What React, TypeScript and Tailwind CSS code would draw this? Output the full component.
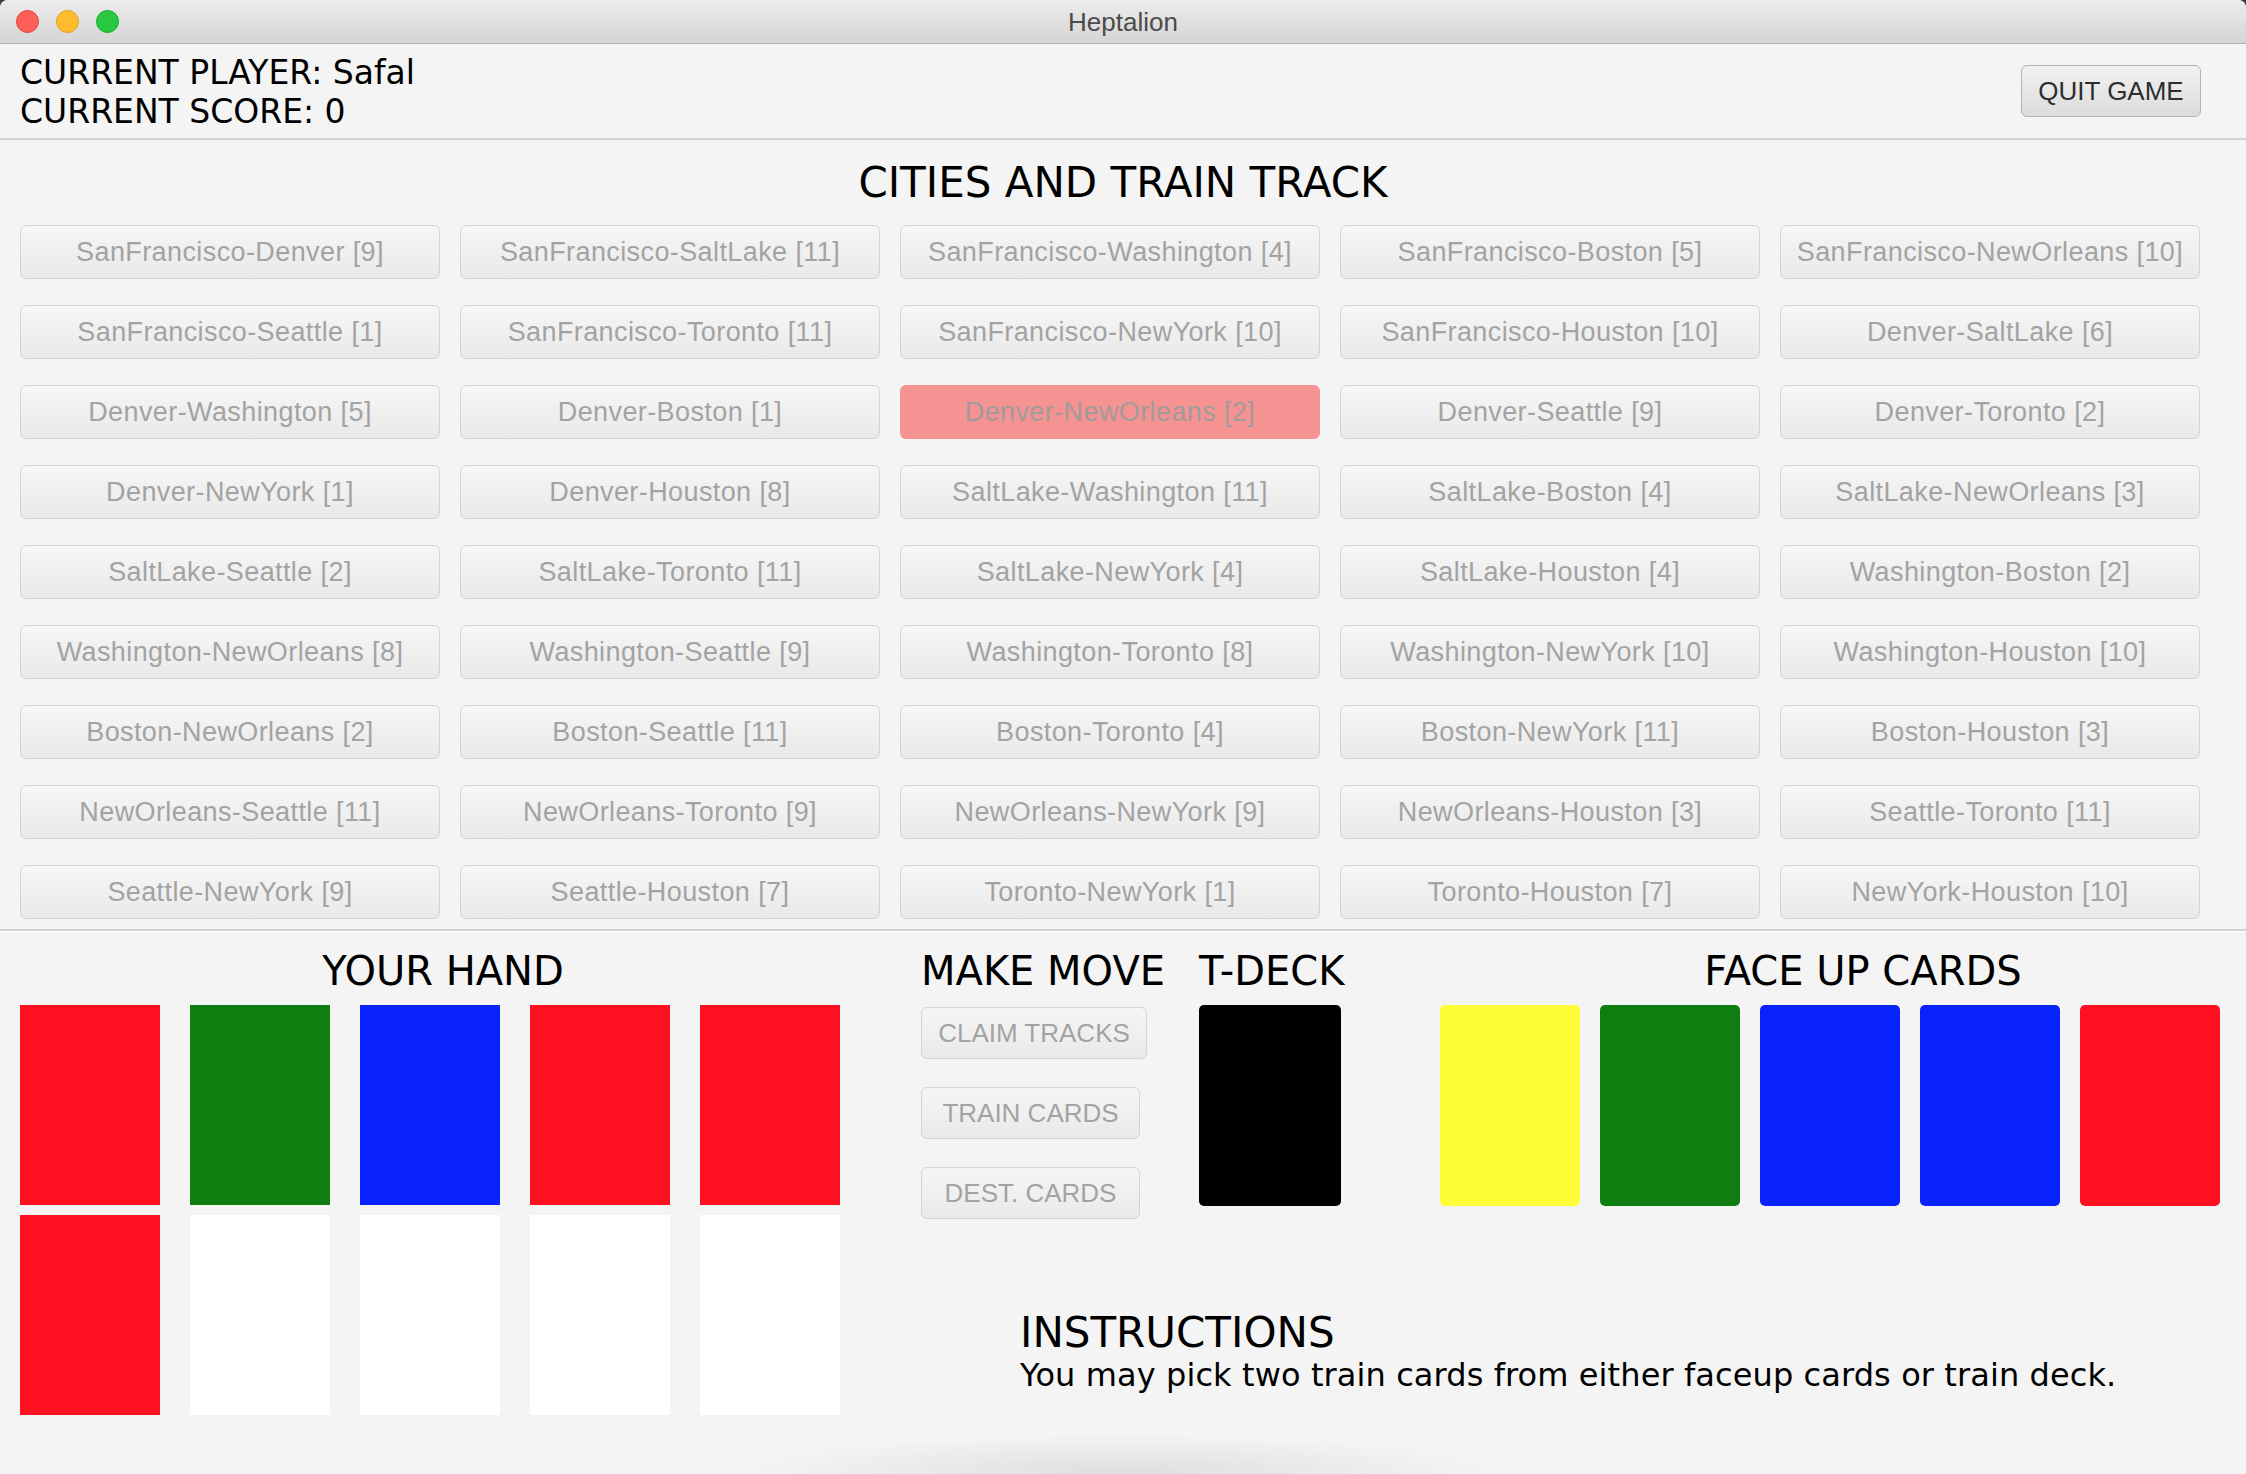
import React from 'react';

type Route = { name: string; len: number; claimed?: boolean };

const ROUTES: Route[] = [
  { name: 'SanFrancisco-Denver', len: 9 },
  { name: 'SanFrancisco-SaltLake', len: 11 },
  { name: 'SanFrancisco-Washington', len: 4 },
  { name: 'SanFrancisco-Boston', len: 5 },
  { name: 'SanFrancisco-NewOrleans', len: 10 },
  { name: 'SanFrancisco-Seattle', len: 1 },
  { name: 'SanFrancisco-Toronto', len: 11 },
  { name: 'SanFrancisco-NewYork', len: 10 },
  { name: 'SanFrancisco-Houston', len: 10 },
  { name: 'Denver-SaltLake', len: 6 },
  { name: 'Denver-Washington', len: 5 },
  { name: 'Denver-Boston', len: 1 },
  { name: 'Denver-NewOrleans', len: 2, claimed: true },
  { name: 'Denver-Seattle', len: 9 },
  { name: 'Denver-Toronto', len: 2 },
  { name: 'Denver-NewYork', len: 1 },
  { name: 'Denver-Houston', len: 8 },
  { name: 'SaltLake-Washington', len: 11 },
  { name: 'SaltLake-Boston', len: 4 },
  { name: 'SaltLake-NewOrleans', len: 3 },
  { name: 'SaltLake-Seattle', len: 2 },
  { name: 'SaltLake-Toronto', len: 11 },
  { name: 'SaltLake-NewYork', len: 4 },
  { name: 'SaltLake-Houston', len: 4 },
  { name: 'Washington-Boston', len: 2 },
  { name: 'Washington-NewOrleans', len: 8 },
  { name: 'Washington-Seattle', len: 9 },
  { name: 'Washington-Toronto', len: 8 },
  { name: 'Washington-NewYork', len: 10 },
  { name: 'Washington-Houston', len: 10 },
  { name: 'Boston-NewOrleans', len: 2 },
  { name: 'Boston-Seattle', len: 11 },
  { name: 'Boston-Toronto', len: 4 },
  { name: 'Boston-NewYork', len: 11 },
  { name: 'Boston-Houston', len: 3 },
  { name: 'NewOrleans-Seattle', len: 11 },
  { name: 'NewOrleans-Toronto', len: 9 },
  { name: 'NewOrleans-NewYork', len: 9 },
  { name: 'NewOrleans-Houston', len: 3 },
  { name: 'Seattle-Toronto', len: 11 },
  { name: 'Seattle-NewYork', len: 9 },
  { name: 'Seattle-Houston', len: 7 },
  { name: 'Toronto-NewYork', len: 1 },
  { name: 'Toronto-Houston', len: 7 },
  { name: 'NewYork-Houston', len: 10 },
];

const COLORS: Record<string, string> = {
  red: 'bg-[#fe1020]',
  green: 'bg-[#0f7e11]',
  blue: 'bg-[#0a22fe]',
  yellow: 'bg-[#fefd38]',
  white: 'bg-white',
};

const HAND = ['red', 'green', 'blue', 'red', 'red', 'red', 'white', 'white', 'white', 'white'];
const FACE_UP = ['yellow', 'green', 'blue', 'blue', 'red'];

const heading = "font-['DejaVu_Sans',sans-serif] text-[40px] leading-none text-black";
const btnText = "font-['Liberation_Sans',Arial,sans-serif] text-[26px]";
const fxButton = 'rounded-[6px] border-[1.5px] border-[#d4d4d4] bg-gradient-to-b from-[#f6f6f6] to-[#e9e9e9] text-[#a3a3a3]';

function TitleBar() {
  return (
    <div className="relative h-[44px] shrink-0 flex items-center justify-center rounded-t-[8px] bg-gradient-to-b from-[#ececec] to-[#d5d5d5] border-b border-[#b4b4b4]">
      <div className="absolute left-[16px] top-[10px] flex gap-[17px]">
        <span className="w-[23px] h-[23px] rounded-full bg-[#fe5f57] border border-[#e0443e]" />
        <span className="w-[23px] h-[23px] rounded-full bg-[#febc2e] border border-[#dea123]" />
        <span className="w-[23px] h-[23px] rounded-full bg-[#28c840] border border-[#1aab29]" />
      </div>
      <span className={`${btnText} text-[#4b4b4b] leading-none`}>Heptalion</span>
    </div>
  );
}

export default function App() {
  return (
    <div className="w-[2246px] h-[1474px] bg-[#3d3b4a] overflow-hidden">
      <div className="h-full flex flex-col rounded-t-[8px] bg-[#f4f4f4] bg-[radial-gradient(ellipse_380px_40px_at_1120px_1474px,#dedede,transparent)]">
        <TitleBar />

        {/* header */}
        <div className="h-[96px] shrink-0 flex items-start justify-between pl-[20px] pr-[45px] pt-[9px] border-b-2 border-[#d2d2d2]">
          <div className="font-['DejaVu_Sans',sans-serif] text-[33px] leading-[39px] text-black">
            <div>CURRENT PLAYER: Safal</div>
            <div>CURRENT SCORE: 0</div>
          </div>
          <button className={`mt-[12px] w-[180px] h-[52px] rounded-[6px] border-[1.5px] border-[#b3b3b3] bg-gradient-to-b from-[#f2f2f2] to-[#dcdcdc] text-[#2e2e2e] ${btnText}`}>
            QUIT GAME
          </button>
        </div>

        {/* board */}
        <div className="h-[85px] shrink-0 flex items-center justify-center">
          <h1 className="font-['DejaVu_Sans',sans-serif] text-[42px] leading-none text-black">CITIES AND TRAIN TRACK</h1>
        </div>
        <div className="grid grid-cols-[repeat(5,420px)] gap-x-[20px] gap-y-[26px] pl-[20px]">
          {ROUTES.map(r => (
            <button
              key={r.name}
              className={`h-[54px] font-['Liberation_Sans',Arial,sans-serif] text-[27px] tracking-[0.4px] ${r.claimed ? 'rounded-[6px] bg-[#f59393] text-[#a39a9a]' : fxButton}`}
            >
              {r.name} [{r.len}]
            </button>
          ))}
        </div>
        <div className="mt-[10px] border-t-2 border-[#d2d2d2] border-b border-b-white" />

        {/* bottom */}
        <div className="flex pl-[20px]">
          <div className="w-[846px] shrink-0 flex flex-col">
            <div className="h-[73px] pt-[5px] flex items-center justify-center">
              <h2 className={heading}>YOUR HAND</h2>
            </div>
            <div className="grid grid-cols-[repeat(5,140px)] gap-x-[30px] gap-y-[10px]">
              {HAND.map((c, i) => (
                <div key={i} className={`h-[200px] ${COLORS[c]}`} />
              ))}
            </div>
          </div>

          <div className="ml-[55px] shrink-0 flex flex-col">
            <div className="flex">
              <div className="w-[278px] shrink-0 flex flex-col">
                <div className="h-[73px] pt-[5px] flex items-center">
                  <h2 className={heading}>MAKE MOVE</h2>
                </div>
                <div className="flex flex-col gap-[28px] pt-[2px]">
                  <button className={`w-[226px] h-[52px] ${fxButton} ${btnText}`}>CLAIM TRACKS</button>
                  <button className={`w-[219px] h-[52px] ${fxButton} ${btnText}`}>TRAIN CARDS</button>
                  <button className={`w-[219px] h-[52px] ${fxButton} ${btnText}`}>DEST. CARDS</button>
                </div>
              </div>
              <div className="w-[241px] shrink-0 flex flex-col">
                <div className="h-[73px] pt-[5px] flex items-center">
                  <h2 className={heading}>T-DECK</h2>
                </div>
                <div className="w-[142px] h-[201px] rounded-[5px] bg-black" />
              </div>
              <div className="w-[846px] shrink-0 flex flex-col">
                <div className="h-[73px] pt-[5px] flex items-center justify-center">
                  <h2 className={heading}>FACE UP CARDS</h2>
                </div>
                <div className="flex gap-[20px]">
                  {FACE_UP.map((c, i) => (
                    <div key={i} className={`w-[140px] h-[201px] rounded-[5px] ${COLORS[c]}`} />
                  ))}
                </div>
              </div>
            </div>

            <div className="ml-[99px] mt-[92px] font-['DejaVu_Sans',sans-serif] text-black">
              <div className="text-[42px] leading-[44px]">INSTRUCTIONS</div>
              <div className="text-[32px] leading-[40px] tracking-[0.1px]">You may pick two train cards from either faceup cards or train deck.</div>
            </div>
          </div>
        </div>
      </div>
    </div>
  );
}
